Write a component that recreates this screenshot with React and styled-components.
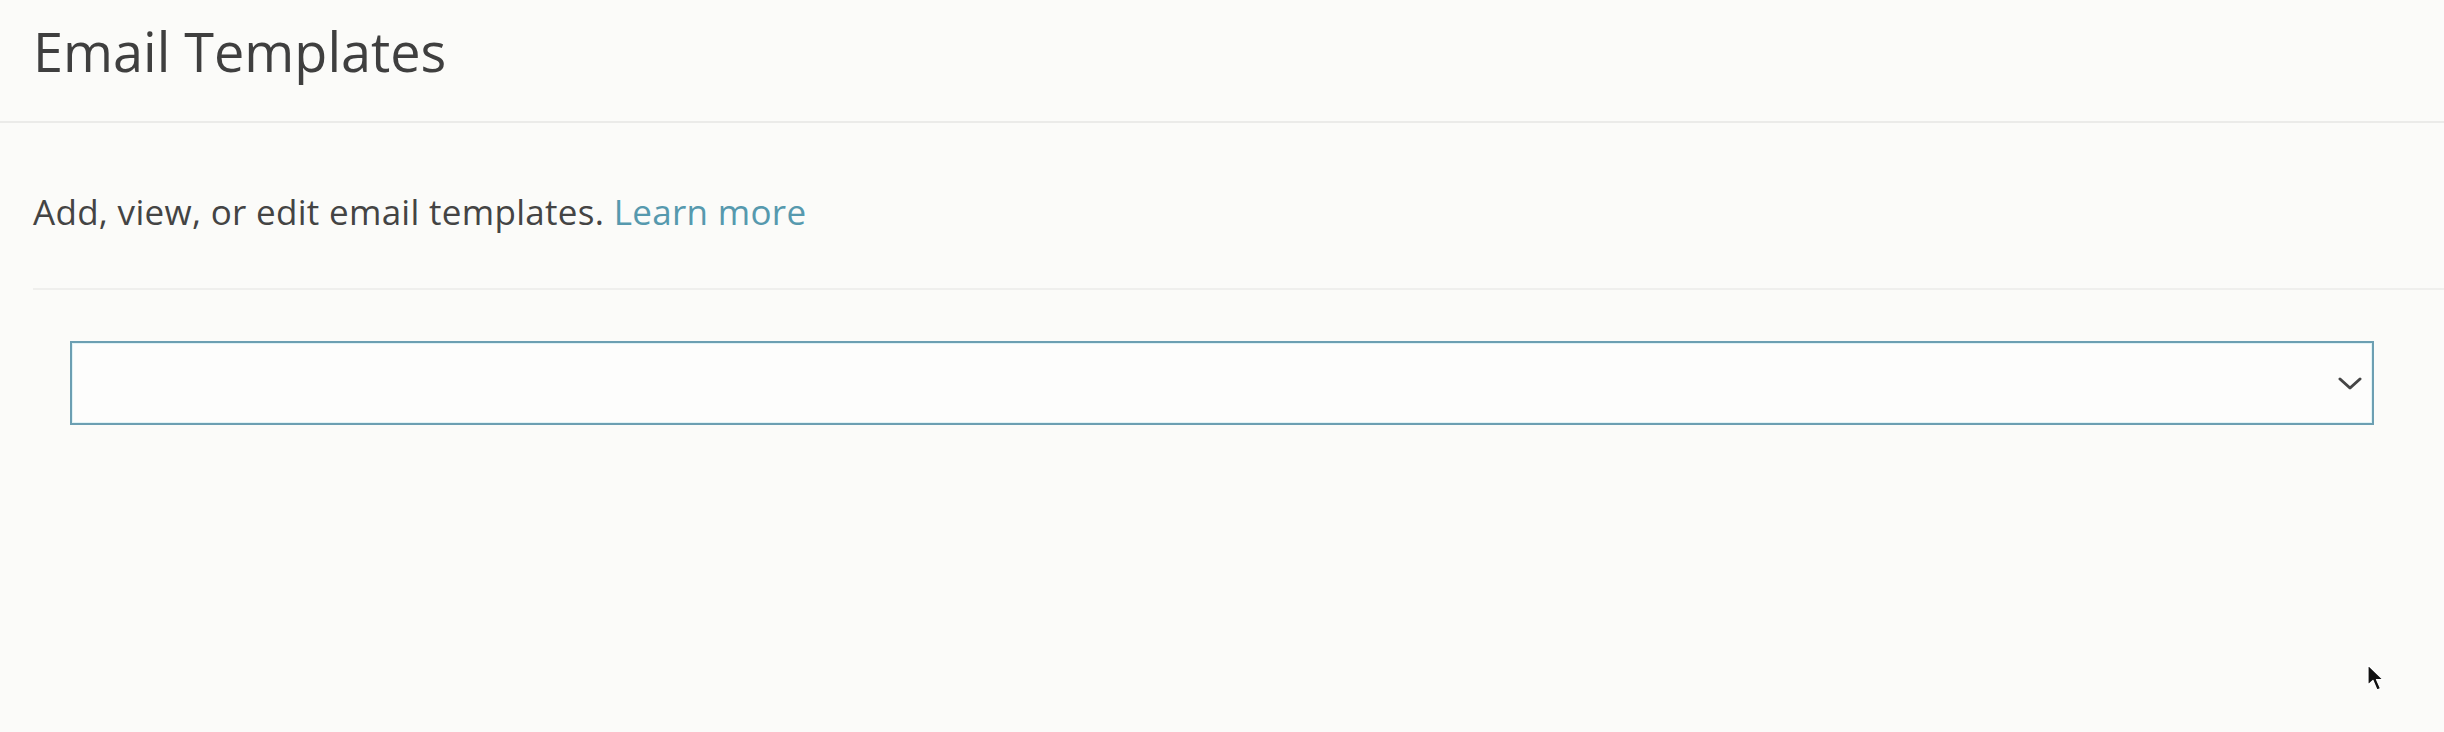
import styled, { createGlobalStyle } from "styled-components";

const GlobalStyle = createGlobalStyle`
  html, body {
    margin: 0;
    padding: 0;
    background: #fbfbf9;
  }

  body {
    font-family: "Open Sans", Lato, sans-serif;
    color: #434343;
  }
`;

const Page = styled.div`
  position: relative;
  min-height: 732px;
  background: #fbfbf9;
`;

const Header = styled.header`
  box-sizing: border-box;
  height: 123px;
  padding: 24px 0 0 33px;
  border-bottom: 2px solid #ebebe9;
`;

const Title = styled.h1`
  margin: 0;
  font-size: 54px;
  font-weight: 400;
  line-height: 1;
  color: #3f3f3f;
`;

const Content = styled.section`
  padding-left: 33px;
`;

const Intro = styled.p`
  margin: 0;
  padding: 71px 0 59px;
  font-size: 35px;
  line-height: 1;
  letter-spacing: 0.3px;
  color: #444;
  border-bottom: 2px solid #efefed;
`;

const LearnMore = styled.a`
  color: #5699ae;
  text-decoration: none;
`;

const SelectBox = styled.div`
  box-sizing: border-box;
  display: flex;
  align-items: center;
  justify-content: flex-end;
  height: 84px;
  margin: 51px 70px 0 37px;
  padding: 2px 10px 0 0;
  background: #fdfdfc;
  border: 2px solid #6c9fb2;
  box-shadow: inset 0 0 0 1px rgba(190, 230, 240, 0.45);
`;

const Chevron = () => (
  <svg width="24" height="14" viewBox="0 0 24 14" fill="none">
    <path
      d="M2 2 L12 11 L22 2"
      stroke="#454545"
      strokeWidth="3"
      strokeLinecap="round"
      strokeLinejoin="round"
    />
  </svg>
);

const Pointer = styled.svg`
  position: absolute;
  left: 2367px;
  top: 664px;
`;

const Cursor = () => (
  <Pointer width="18" height="28" viewBox="0 0 18 28">
    <path
      d="M1 1 L1 21 L6 16.5 L10 26 L13.5 24.5 L9.5 15.5 L16 15.5 Z"
      fill="#111"
      stroke="#fff"
      strokeWidth="1.2"
      strokeLinejoin="round"
    />
  </Pointer>
);

export default function App() {
  return (
    <>
      <GlobalStyle />
      <Page>
        <Header>
          <Title>Email Templates</Title>
        </Header>
        <Content>
          <Intro>
            Add, view, or edit email templates.{" "}
            <LearnMore href="#">Learn more</LearnMore>
          </Intro>
          <SelectBox role="combobox" aria-expanded="false">
            <Chevron />
          </SelectBox>
        </Content>
        <Cursor />
      </Page>
    </>
  );
}
